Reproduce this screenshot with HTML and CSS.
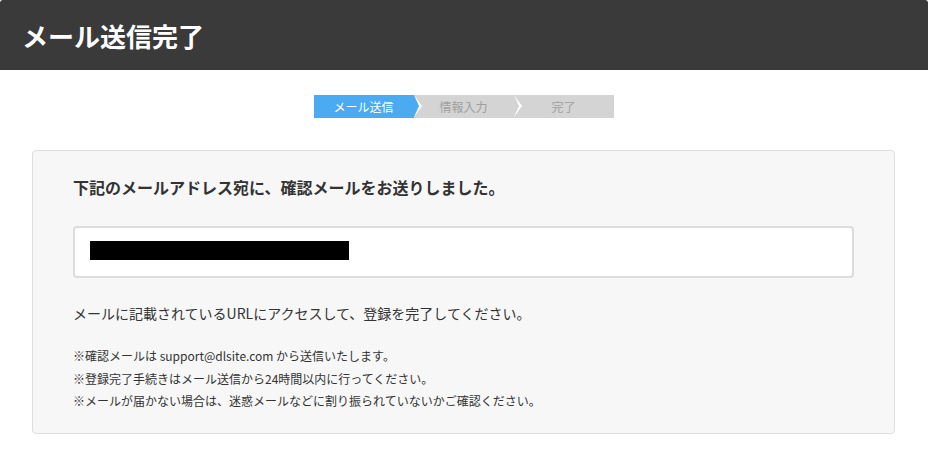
FILE: index.html
```html
<!DOCTYPE html>
<html lang="ja">
<head>
    <title>メール送信完了</title>
    <meta charset="UTF-8">
    <meta name="viewport" content="width=device-width, initial-scale=1.0">
    <link rel="stylesheet" href="styles.css">
</head>
<body>
    <div class="page-header">
        <h1>メール送信完了</h1>
    </div>

    <div class="page-body">
        <ol class="steps">
            <li class="step current">メール送信</li>
            <li class="step">情報入力</li>
            <li class="step">完了</li>
        </ol>

        <div class="notice-box">
            <p class="notice-title">下記のメールアドレス宛に、確認メールをお送りしました。</p>

            <div class="mail-field">
                <span class="masked"></span>
            </div>

            <p class="notice-text">メールに記載されているURLにアクセスして、登録を完了してください。</p>

            <ul class="notes">
                <li>※確認メールは support@dlsite.com から送信いたします。</li>
                <li>※登録完了手続きはメール送信から24時間以内に行ってください。</li>
                <li>※メールが届かない場合は、迷惑メールなどに割り振られていないかご確認ください。</li>
            </ul>
        </div>
    </div>
</body>
</html>
```

FILE: styles.css
```css
body {
    margin: 0;
    background: #fff;
    color: #333;
    font-family: "Noto Sans CJK JP", "Noto Sans", sans-serif;
}

.page-header {
    height: 70px;
    padding: 0 22px;
    background: #3a3a3a;
    border-radius: 3px 3px 0 0;
    display: flex;
    align-items: center;
}

.page-header h1 {
    margin: 0;
    color: #fff;
    font-size: 26px;
    font-weight: bold;
}

.page-body {
    padding: 25px 33px 0 32px;
}

.steps {
    display: flex;
    justify-content: center;
    margin: 0 0 32px;
    padding: 0;
    list-style: none;
}

.step {
    position: relative;
    width: 100px;
    height: 23px;
    line-height: 23px;
    text-align: center;
    font-size: 12px;
    color: #9f9f9f;
    background: #d4d4d4;
}

.step.current {
    color: #fff;
    background: #4aabf3;
}

.step:not(:last-child)::before,
.step:not(:last-child)::after {
    content: "";
    position: absolute;
    top: 0;
    width: 0;
    height: 0;
    border-top: 11.5px solid transparent;
    border-bottom: 11.5px solid transparent;
}

.step:not(:last-child)::before {
    right: -8px;
    border-left: 8px solid #fff;
    z-index: 1;
}

.step:not(:last-child)::after {
    right: -5px;
    border-left: 5px solid #d4d4d4;
    z-index: 2;
}

.step.current::after {
    border-left-color: #4aabf3;
}

.notice-box {
    padding: 24px 40px 20px 40px;
    background: #f7f7f7;
    border: 1px solid #dedede;
    border-radius: 4px;
}

.notice-title {
    margin: 0 0 27px;
    font-size: 16px;
    font-weight: bold;
    line-height: 24px;
}

.mail-field {
    height: 52px;
    padding: 13px 15px 0;
    box-sizing: border-box;
    background: #fff;
    border: 2px solid #dcdcdc;
    border-radius: 4px;
}

.masked {
    display: block;
    width: 259px;
    height: 19px;
    background: #000;
}

.notice-text {
    margin: 24px 0 21px;
    font-size: 14px;
    line-height: 22px;
}

.notes {
    margin: 0;
    padding: 0;
    list-style: none;
    font-size: 12px;
    line-height: 22.5px;
}
```
